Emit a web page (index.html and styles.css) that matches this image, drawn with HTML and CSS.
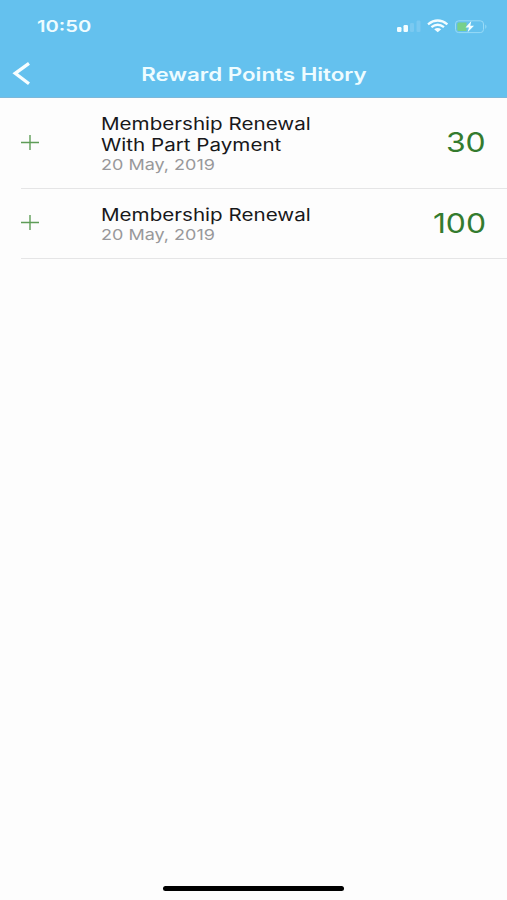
FILE: index.html
```html
<!DOCTYPE html>
<html lang="en">
<head>
<meta charset="utf-8">
<title>Reward Points Hitory</title>
<link rel="stylesheet" href="styles.css">
</head>
<body>
<div class="screen">
  <header class="header">
    <div class="status">
      <span class="time wide">10:50</span>
      <svg class="indicators" width="94" height="18" viewBox="0 0 94 18">
        <g fill="#f2fdff">
          <rect x="1" y="10" width="4.5" height="5" rx="1.2"/>
          <rect x="7.5" y="8" width="4.5" height="7" rx="1.2"/>
        </g>
        <g fill="#8fd2f4">
          <rect x="14" y="6" width="4" height="9" rx="1.2" opacity=".5"/>
          <rect x="20.5" y="3.5" width="4" height="11.5" rx="1.2" opacity=".5"/>
        </g>
        <g fill="none" stroke="#f2fdff" stroke-width="2.3">
          <path d="M32 7.3Q41.7 -.2 51.4 7.3"/>
          <path d="M35.4 10.2Q41.7 5.3 48 10.2"/>
        </g>
        <path d="M38.2 12.2Q41.7 9.8 45.2 12.2L41.7 15.3Z" fill="#f2fdff"/>
        <rect x="59.5" y="3.8" width="28" height="11.8" rx="3.2" fill="none" stroke="#98dbf7"/>
        <path d="M62.8 5.4H70.5V14H62.8Q61.3 14 61.3 12.5V6.9Q61.3 5.4 62.8 5.4Z" fill="#78d08a"/>
        <path d="M89.3 7.5Q91.6 9.7 89.3 12Z" fill="#98dbf7"/>
        <path d="M75.3 4L69.5 10.6H73L71.6 15.2L78 8.7H74.3Z" fill="#f5ffff"/>
      </svg>
    </div>
    <div class="nav">
      <svg class="back" width="20" height="26" viewBox="0 0 20 26"><path d="M17 2.4L3.2 12.4L17 22.8" fill="none" stroke="#f7feff" stroke-width="3.3"/></svg>
      <h1 class="heading wide">Reward Points Hitory</h1>
    </div>
  </header>
  <main class="list">
    <section class="row row-tall">
      <svg class="plus" width="18" height="16" viewBox="0 0 18 16"><path d="M0 7.5H18M9 0V15" stroke="#5e9d57" stroke-width="1.4"/></svg>
      <div class="details">
        <div class="name wide">Membership Renewal<br>With Part Payment</div>
        <div class="date wide">20 May, 2019</div>
      </div>
      <div class="points wide">30</div>
    </section>
    <section class="row">
      <svg class="plus" width="18" height="16" viewBox="0 0 18 16"><path d="M0 6.5H18M9 -1V14" stroke="#5e9d57" stroke-width="1.4"/></svg>
      <div class="details">
        <div class="name wide">Membership Renewal</div>
        <div class="date wide">20 May, 2019</div>
      </div>
      <div class="points wide">100</div>
    </section>
  </main>
  <footer class="home"><div class="home-bar"></div></footer>
</div>
</body>
</html>
```
FILE: styles.css
```css
* { box-sizing: border-box; }
body { margin: 0; font-family: Inter, "Liberation Sans", sans-serif; background: #fdfdfd; }
.screen { width: 507px; height: 900px; display: flex; flex-direction: column; background: #fdfdfd; overflow: hidden; }
.wide { transform: scaleX(1.24); transform-origin: left center; white-space: nowrap; }
.header { height: 98px; flex: none; background: #64c1ee; border-bottom: 1px solid #7cb8da; }
.status { height: 50px; padding: 2px 17px 0 37px; display: flex; align-items: center; justify-content: space-between; }
.time { font-size: 16px; font-weight: 600; color: #eefcff; transform: scaleX(1.26); }
.indicators { display: block; }
.nav { height: 48px; display: grid; grid-template-columns: 34px 1fr 46px; align-items: center; padding: 0 0 0 12px; }
.back { display: block; }
.heading { margin: 0; font-size: 18px; font-weight: 600; color: #eefcff; justify-self: center; transform-origin: center; }
.row { height: 70px; margin-left: 21px; padding-right: 21px; display: flex; align-items: center; border-bottom: 1px solid #e5e5e6; }
.row-tall { height: 91px; }
.plus { flex: none; margin-right: 62px; overflow: visible; }
.details { flex: 1; }
.name { font-size: 17px; line-height: 21px; padding-top: 1px; color: #18181a; transform: scaleX(1.212); }
.date { font-size: 15px; line-height: 18px; color: #98989a; transform: scaleX(1.2); }
.points { font-size: 27px; line-height: 32px; color: #347b2e; transform-origin: right center; transform: scaleX(1.18); }
.home { margin-top: auto; height: 14px; display: flex; justify-content: center; }
.home-bar { width: 181px; height: 5px; border-radius: 3px; background: #000; }
```
